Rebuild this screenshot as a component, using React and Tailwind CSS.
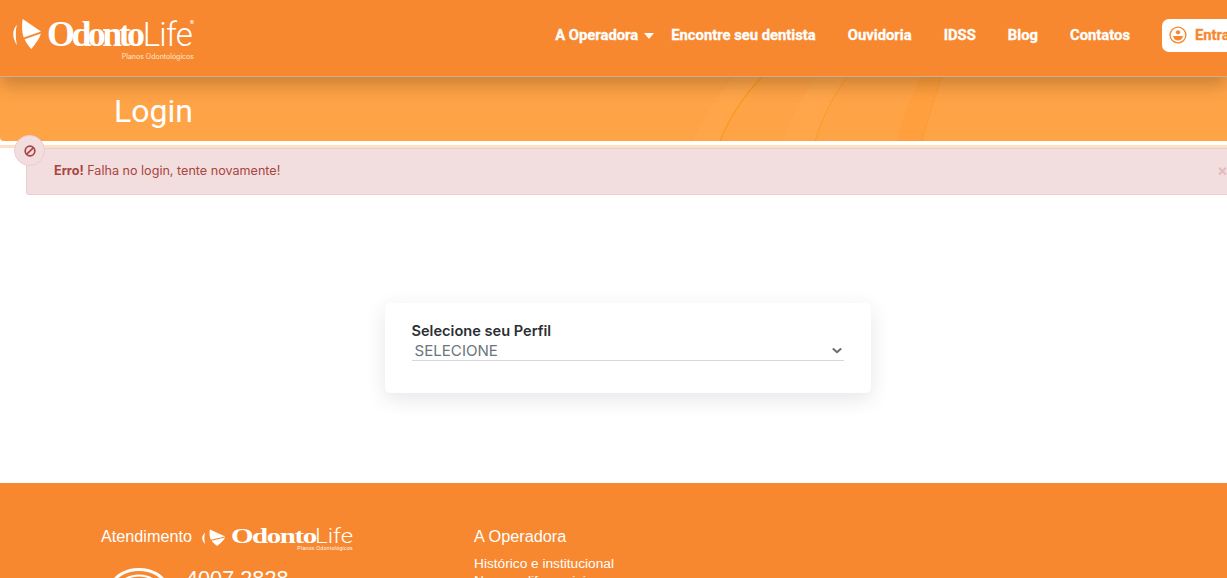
import React from "react";

function LogoMark({ className }) {
  return (
    <svg viewBox="0 0 30 32" preserveAspectRatio="none" className={className} fill="currentColor">
      <path d="M4 7 C-1 13 -1 20 4 28 C2.5 20 2.5 13 4 7Z" />
      <path d="M10 1 L29 14 L11 20 C9 14 9 7 10 1Z" />
      <path d="M12 22 L29 16 C27 22 23 27 19 32 C16 29 14 26 12 22Z" />
    </svg>
  );
}

function HeaderLogo() {
  return (
    <div className="flex items-start text-white w-[181px]">
      <LogoMark className="w-[29px] h-[31px] shrink-0 mt-[1px]" />
      <div className="relative ml-[5px] w-[147px] h-[36px]">
        <div className="flex items-baseline h-[34px] leading-[34px] whitespace-nowrap">
          <span className="font-['Liberation_Serif',serif] font-bold text-[36px] tracking-[-3.6px] w-[97px] inline-block">Odonto</span>
          <span className="font-['Roboto',sans-serif] font-light text-[33px] tracking-[-0.8px]">Life</span>
          <span className="text-[6px] self-start leading-[8px] mt-[2px] -ml-[2px]">®</span>
        </div>
        <div className="absolute right-0 top-[35px] text-[7px] leading-[9px] whitespace-nowrap text-[#ffe6d0]">
          Planos Odontológicos
        </div>
      </div>
    </div>
  );
}

function FooterLogo() {
  return (
    <div className="flex items-start text-white w-[151px]">
      <LogoMark className="w-[24px] h-[17px] mt-[2px] shrink-0" />
      <div className="relative ml-[5px] w-[122px] h-[24px]">
        <div className="flex items-baseline h-[18px] leading-[18px] whitespace-nowrap">
          <span className="font-['Liberation_Serif',serif] font-bold text-[20px] tracking-[-1px] w-[84px] inline-block origin-left scale-x-[1.45]">Odonto</span>
          <span className="font-['Roboto',sans-serif] font-light text-[20px] w-[36px] inline-block origin-left scale-x-[1.2]">Life</span>
        </div>
        <div className="absolute right-0 top-[18px] text-[5px] leading-[6px] whitespace-nowrap tracking-[0.35px]">
          Planos Odontológicos
        </div>
      </div>
    </div>
  );
}

function NavLink({ children }) {
  return <a className="whitespace-nowrap">{children}</a>;
}

export default function App() {
  return (
    <div className="w-[1227px] h-[578px] overflow-hidden bg-white flex flex-col font-['Inter',sans-serif]">
      <header className="relative z-10 h-[77px] shrink-0 bg-[#f7882f] border-b border-[#c9b09a] shadow-[0_8px_16px_rgba(70,40,0,0.28)] flex items-center pl-[13px]">
        <div className="-mt-[6px]">
          <HeaderLogo />
        </div>
        <nav className="ml-auto flex items-center gap-8 text-white font-['Roboto',sans-serif] font-bold text-[14.8px] [-webkit-text-stroke:0.3px_white] -mt-[6px] -mr-[60px]">
          <div className="flex items-center">
            <NavLink>A Operadora</NavLink>
            <svg viewBox="0 0 10 6" className="w-[10px] h-[6px] ml-[6px] mt-[2px] mr-[-15px]" fill="white">
              <path d="M0 0 H10 L5 6 Z" />
            </svg>
          </div>
          <NavLink>Encontre seu dentista</NavLink>
          <NavLink>Ouvidoria</NavLink>
          <NavLink>IDSS</NavLink>
          <NavLink>Blog</NavLink>
          <NavLink>Contatos</NavLink>
          <button className="w-[125px] h-[33px] rounded-[7px] bg-white flex items-center pl-[7px] gap-[8px] text-[#f7882f] [-webkit-text-stroke:0.3px_#f7882f]">
            <svg viewBox="0 0 20 20" className="w-[18px] h-[18px] shrink-0" fill="none" stroke="#f7882f" strokeWidth="1.5">
              <circle cx="10" cy="10" r="8.8" />
              <circle cx="10" cy="7" r="2.4" fill="#f7882f" stroke="none" />
              <path d="M4.5 11 H15.5 C15 14.5 12.5 16 10 16 C7.5 16 5 14.5 4.5 11Z" fill="#f7882f" stroke="none" />
            </svg>
            Entrar
          </button>
        </nav>
      </header>

      <section className="relative h-[64px] shrink-0 bg-[#ffa347] rounded-bl-[4px] flex items-center pl-[114px] overflow-hidden">
        <svg viewBox="0 0 300 64" className="absolute left-[680px] top-0 w-[300px] h-[64px]" fill="none">
          <path d="M13 64 C24 40 38 18 53 0 H82 C64 18 50 40 40 64 Z" fill="#ffa94f" opacity="0.55" />
          <path d="M40 64 C50 40 64 18 82 0" stroke="#fb9820" strokeWidth="1.3" />
          <path d="M103 64 C110 42 122 18 137 0 H167 C152 20 142 42 135 64 Z" fill="#ffa94f" opacity="0.5" />
          <path d="M135 64 C142 42 152 20 167 0" stroke="#fb9a26" strokeWidth="1" />
          <path d="M217 64 C222 42 231 20 240 0 H262 C254 22 248 42 242 64 Z" fill="#ff9f3e" />
          <path d="M242 64 C248 42 254 22 262 0" stroke="#fb9a2c" strokeWidth="0.8" />
        </svg>
        <h1 className="relative text-white text-[32px] leading-none mt-[4px] font-['Roboto',sans-serif] font-normal">Login</h1>
      </section>

      <div className="h-[4px] shrink-0 bg-white" />
      <div className="h-[3px] shrink-0 bg-[#ffe0c2]" />

      <div className="relative shrink-0 pl-[26px] h-[47px]">
        <div className="w-[1230px] h-[47px] bg-[#f2dede] border border-[#ebccd1] rounded-[3px] flex items-center pl-[27px] pb-[1px] text-[12.6px] text-[#a94442] relative">
          <span><b className="font-bold">Erro!</b> Falha no login, tente novamente!</span>
          <span className="absolute left-[1190px] top-[11px] text-[16px] leading-[20px] font-bold text-[#e3bcbc]">×</span>
        </div>
        <div className="absolute left-[14px] -top-[13px] w-[31px] h-[31px] rounded-full bg-[#f2dede] border border-[#ebccd1] flex items-center justify-center">
          <svg viewBox="0 0 14 14" className="w-[12px] h-[12px]" fill="none" stroke="#a94442" strokeWidth="2">
            <circle cx="7" cy="7" r="5.6" />
            <path d="M3 11 L11 3" />
          </svg>
        </div>
      </div>

      <main className="w-[1256px] h-[288px] shrink-0 flex justify-center pt-[108px]">
        <div className="w-[486px] h-[90px] bg-white rounded-[5px] shadow-[0_6px_20px_rgba(40,50,70,0.12)] pl-[26.5px] pr-[27px] pt-[20px]">
          <label className="block text-[14.6px] leading-[17px] font-semibold text-[#2b2f33]">Selecione seu Perfil</label>
          <div className="h-[21px] border-b border-[#d5d8dc] flex items-center justify-between pl-[3px] pr-[2px]">
            <span className="text-[15.1px] leading-[19px] text-[#6c757d]">SELECIONE</span>
            <svg viewBox="0 0 12 8" className="w-[10px] h-[7px]" fill="none" stroke="#6b6b6b" strokeWidth="2.4">
              <path d="M1 1.5 L6 6 L11 1.5" />
            </svg>
          </div>
        </div>
      </main>

      <footer className="flex-1 bg-[#f7882f] text-white font-['Liberation_Sans',sans-serif] flex pl-[101px] pt-[43px] overflow-hidden">
        <div className="w-[373px]">
          <div className="flex items-start">
            <span className="text-[16.2px] leading-[20px]">Atendimento</span>
            <div className="ml-[10px] mt-[1px]">
              <FooterLogo />
            </div>
          </div>
          <div className="flex items-start mt-[5px] ml-[8px]">
            <svg viewBox="0 0 60 30" className="w-[60px] h-[30px] mt-[2px]" fill="none" stroke="white" strokeWidth="3">
              <path d="M2 28 C10 6 50 6 58 28" />
              <path d="M10 28 C18 14 42 14 50 28" strokeWidth="2" />
            </svg>
            <span className="ml-[17px] mt-[10px] text-[21.7px] leading-[26px]">4007 2828</span>
          </div>
        </div>
        <div>
          <div className="text-[16.3px] leading-[20px]">A Operadora</div>
          <ul className="mt-[9px] text-[13.7px] leading-[17px]">
            <li>Histórico e institucional</li>
            <li>Nossos diferenciais</li>
          </ul>
        </div>
      </footer>
    </div>
  );
}
